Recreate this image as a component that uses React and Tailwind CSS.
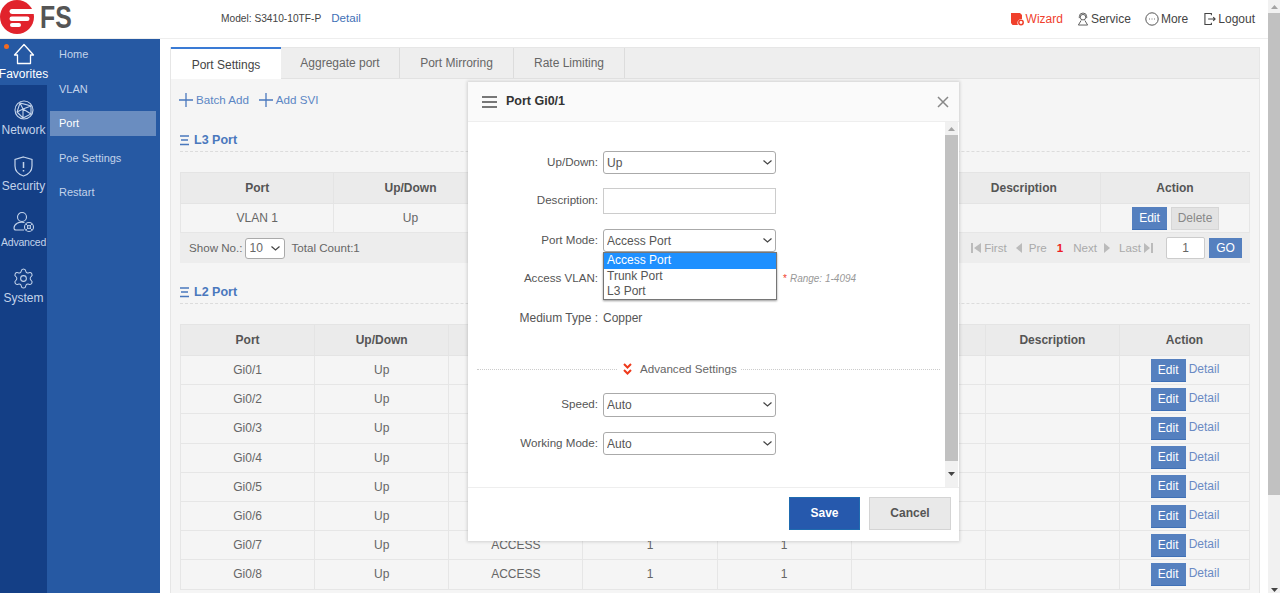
import { Settings } from "lucide-react"

const l2rows = [
  { port: "Gi0/1" },
  { port: "Gi0/2" },
  { port: "Gi0/3" },
  { port: "Gi0/4" },
  { port: "Gi0/5" },
  { port: "Gi0/6" },
  { port: "Gi0/7", mode: "ACCESS", pvid: "1", vlan: "1" },
  { port: "Gi0/8", mode: "ACCESS", pvid: "1", vlan: "1" },
]

function FsLogo() {
  return (
    <div className="flex items-center h-[38px]">
      <svg width="34" height="34" viewBox="0 0 34 34" className="-mt-[5px] shrink-0">
        <circle cx="17" cy="17" r="17" fill="#e1232c" />
        <path d="M12 9h22v5H12a2.500 2.500 0 0 1 0-5z" fill="#fff" />
        <rect x="9.500" y="16.500" width="20" height="4.500" rx="2.200" fill="#fff" />
        <rect x="10" y="23" width="11" height="4" rx="2" fill="#fff" />
      </svg>
      <span className="ml-[6px] -mt-[2px] text-[31px] font-bold leading-[36px] text-[#555] scale-x-[0.8] origin-left">FS</span>
    </div>
  )
}

function TopLink({ icon, label, red, className = "" }) {
  return (
    <div className={`flex items-center gap-[2px] text-[12px] ${red ? "text-[#f0402c]" : "text-[#444]"} ${className}`}>
      {icon}
      <span>{label}</span>
    </div>
  )
}

function SideIcon({ label, small, active, first, children }) {
  return (
    <div className={`flex flex-col items-center justify-end pb-[3px] ${first ? "h-[46px]" : "h-[56px]"} ${active ? "bg-[#2659a3] text-white" : "text-[#c3d3ea]"}`}>
      <div className="h-[22px] flex items-center justify-center">{children}</div>
      <span className={`leading-[15px] mt-[2px] ${small ? "text-[10.5px] tracking-[-0.2px]" : "text-[12px]"}`}>{label}</span>
    </div>
  )
}

function Th({ children, className = "" }) {
  return <th className={`border border-[#e4e4e4] font-bold text-[12px] text-[#555] ${className}`}>{children}</th>
}

function Td({ children, className = "" }) {
  return <td className={`border border-[#e6e6e6] text-center text-[12px] text-[#666] ${className}`}>{children}</td>
}

function SectionTitle({ children, className = "" }) {
  return (
    <div className={`flex items-center gap-[5px] h-[24px] border-b border-dashed border-[#dcdcdc] ${className}`}>
      <svg width="9" height="12" viewBox="0 0 9 12" stroke="#4a78bd" strokeWidth="1.300">
        <path d="M0 2h9M1 6h7M0 10.500h9" />
      </svg>
      <span className="pt-[2px] text-[12.5px] font-bold text-[#4a78bd]">{children}</span>
    </div>
  )
}

function EditBtn() {
  return <span className="inline-flex items-center justify-center w-[35px] h-[23px] bg-[#5580bf] border-b border-[#3f70b6] text-white text-[12px]">Edit</span>
}

function PlusIcon({ className = "" }) {
  return (
    <svg width="14" height="14" viewBox="0 0 14 14" stroke="#4a78bd" strokeWidth="1.300" className={className}>
      <path d="M7 0v14M0 7h14" />
    </svg>
  )
}

function Chevron({ className = "" }) {
  return (
    <svg width="9" height="5" viewBox="0 0 9 5" fill="none" stroke="#444" strokeWidth="1.200" className={`absolute pointer-events-none ${className}`}>
      <path d="M.5.500l4 3.500 4-3.500" />
    </svg>
  )
}

function FormRow({ label, className = "", children }) {
  return (
    <div className={`flex items-center ${className}`}>
      <label className="w-[130px] text-right text-[11.6px] text-[#555] shrink-0 -mt-[2px]">{label}</label>
      <div className="ml-[5px] w-[173px] h-full">{children}</div>
    </div>
  )
}

function FormSelect({ value }) {
  return (
    <div className="relative h-full">
      <select defaultValue={value} className="block w-full h-full appearance-none border border-[#aaa] rounded-[3px] bg-white pl-[3px] text-[12px] text-[#555]">
        <option>{value}</option>
      </select>
      <Chevron className="right-[4px] top-[9px]" />
    </div>
  )
}

export default function App() {
  return (
    <div className="relative w-[1280px] h-[593px] overflow-hidden flex bg-white font-['Liberation_Sans',Arial,sans-serif]">
      <div className="w-[1268px] flex flex-col shrink-0">
        {/* header */}
        <header className="h-[39px] flex items-center border-b border-[#eee] shrink-0">
          <div className="w-[221px] shrink-0"><FsLogo /></div>
          <span className="text-[10.2px] text-[#444]">Model: S3410-10TF-P</span>
          <span className="ml-[10px] -mt-[3px] text-[11.6px] text-[#3f70b6]">Detail</span>
          <div className="ml-auto mr-[13px] flex items-center gap-[14px]">
            <TopLink red label="Wizard" icon={
              <svg width="13" height="14" viewBox="0 0 13 14">
                <path d="M0 1h9l2 2v4a4 4 0 0 0-4 6H1.500L0 11z" fill="#f0402c" />
                <circle cx="10" cy="10.500" r="2.200" fill="none" stroke="#f0402c" strokeWidth="1.500" />
              </svg>
            } />
            <TopLink label="Service" icon={
              <svg width="12" height="15" viewBox="0 0 13 15" fill="none" stroke="#555" strokeWidth="1">
                <circle cx="6.500" cy="5" r="3" />
                <path d="M2.500 6V4.500a4 4 0 0 1 8 0V6M4.500 8.500 1.500 13.500h10l-3-5" />
              </svg>
            } />
            <TopLink label="More" icon={
              <svg width="14" height="14" viewBox="0 0 14 14" fill="none" stroke="#555">
                <circle cx="7" cy="7" r="6.200" />
                <path d="M4 7h.8M6.600 7h.8M9.200 7h.8" strokeWidth="1.200" />
              </svg>
            } />
            <TopLink className="ml-[2px]" label="Logout" icon={
              <svg width="12" height="14" viewBox="0 0 13 14" fill="none" stroke="#444" strokeWidth="1.200">
                <path d="M8 3V1H1v12h7v-2M4.500 7H12M10 5l2 2-2 2" />
              </svg>
            } />
          </div>
        </header>

        <div className="flex-1 flex min-h-0">
          {/* sidebar */}
          <aside className="w-[160px] shrink-0 flex bg-[#2659a3]">
            <nav className="w-[47px] bg-[#143f86] relative">
              <span className="absolute left-[4px] top-[5px] w-[5px] h-[5px] rounded-full bg-[#f26a21]" />
              <SideIcon label="Favorites" active first>
                <svg width="22" height="22" viewBox="0 0 22 22" fill="none" stroke="currentColor" strokeWidth="1.300" strokeLinejoin="round">
                  <path d="M1.500 12 11 1.500 20.500 12H17.500V20.500H4.500V12z" />
                </svg>
              </SideIcon>
              <SideIcon label="Network">
                <svg width="20" height="20" viewBox="0 0 20 20" fill="none" stroke="currentColor" strokeWidth="1.100">
                  <circle cx="10" cy="10" r="9" />
                  <path d="M6 3 3 12l6 6 8-4 0-8zM6 3l3 6-6 3M9 9l8-3M9 9v9M9 9l8 5" />
                </svg>
              </SideIcon>
              <SideIcon label="Security">
                <svg width="19" height="21" viewBox="0 0 19 21" fill="none" stroke="currentColor" strokeWidth="1.200">
                  <path d="M9.500 1 18 3.500V10c0 5-4 8.500-8.500 10C5 18.500 1 15 1 10V3.500z" />
                  <path d="M9.500 6v6M9.500 14v1.500" strokeWidth="1.500" />
                </svg>
              </SideIcon>
              <SideIcon label="Advanced" small>
                <svg width="22" height="22" viewBox="0 0 22 22" fill="none" stroke="currentColor" strokeWidth="1.100">
                  <circle cx="9" cy="6" r="4.500" />
                  <path d="M11.500 11.500C6 10 1 13 1 17c0 1.500 1 2 2 2h8" />
                  <circle cx="16" cy="16" r="4.500" />
                  <path d="M13 13l6 6M19 13l-6 6" strokeWidth="0.900" />
                  <circle cx="16" cy="16" r="1.500" fill="#143f86" />
                </svg>
              </SideIcon>
              <SideIcon label="System">
                <Settings size={23} strokeWidth={1.100} />
              </SideIcon>
            </nav>
            <ul className="flex-1 pl-[3px] pr-[4px] text-[11px] text-[#c3d3ea]">
              <li className="h-[25px] mt-[3px] mb-[9.500px] flex items-center pl-[9px]">Home</li>
              <li className="h-[25px] mb-[9.500px] flex items-center pl-[9px]">VLAN</li>
              <li className="h-[25px] mb-[9.500px] flex items-center pl-[9px] bg-[#6a8dc0] text-white">Port</li>
              <li className="h-[25px] mb-[9.500px] flex items-center pl-[9px]">Poe Settings</li>
              <li className="h-[25px] flex items-center pl-[9px]">Restart</li>
            </ul>
          </aside>

          {/* content */}
          <main className="flex-1 min-w-0 pl-[10px] pr-[8px] pt-[8px]">
            <div className="h-[600px] bg-[#f5f5f5] border border-[#e6e6e6]">
              <div className="h-[31px] flex bg-[#eee] border-b border-[#e2e2e2] text-[12px] text-[#666]">
                <div className="w-[110px] h-[32px] -mt-px flex items-center justify-center bg-white border-t-2 border-[#3a7bd5] text-[#444] pt-[1px]">Port Settings</div>
                <div className="w-[119px] flex items-center justify-center border-r border-[#dcdcdc]">Aggregate port</div>
                <div className="w-[114px] flex items-center justify-center border-r border-[#dcdcdc]">Port Mirroring</div>
                <div className="w-[111px] flex items-center justify-center border-r border-[#dcdcdc]">Rate Limiting</div>
              </div>
              <div className="px-[9px]">
                <div className="flex items-center h-[20px] mt-[11px] text-[11.6px] text-[#5b86c4]">
                  <PlusIcon className="-ml-px" />
                  <span className="ml-[3px]">Batch Add</span>
                  <PlusIcon className="ml-[10px]" />
                  <span className="ml-[3px]">Add SVI</span>
                </div>

                <SectionTitle className="mt-[18px]">L3 Port</SectionTitle>
                <table className="mt-[20px] w-[1070px] table-fixed border-collapse">
                  <thead>
                    <tr className="h-[31px] bg-[#ebebeb]">
                      <Th>Port</Th>
                      <Th>Up/Down</Th>
                      <Th />
                      <Th />
                      <Th />
                      <Th>Description</Th>
                      <Th className="w-[149px]">Action</Th>
                    </tr>
                  </thead>
                  <tbody>
                    <tr className="h-[29px]">
                      <Td>VLAN 1</Td>
                      <Td>Up</Td>
                      <Td />
                      <Td />
                      <Td />
                      <Td />
                      <Td>
                        <div className="flex items-center justify-center gap-[4px] ml-[1px]">
                          <EditBtn />
                          <span className="inline-flex items-center justify-center w-[48px] h-[23px] bg-[#e3e3e3] border border-[#d6d6d6] text-[#888] text-[12px]">Delete</span>
                        </div>
                      </Td>
                    </tr>
                  </tbody>
                </table>
                <div className="w-[1070px] h-[30px] bg-[#ededed] flex items-center text-[11.6px] text-[#666] pl-[9px] pr-[8px]">
                  <span>Show No.:</span>
                  <div className="relative ml-[2px] w-[40px] h-[21px]">
                    <select defaultValue="10" className="block w-full h-full appearance-none border border-[#aaa] rounded-[3px] bg-white pl-[4px] text-[12px] text-[#666]">
                      <option>10</option>
                    </select>
                    <Chevron className="right-[5px] top-[8px]" />
                  </div>
                  <span className="ml-[7px]">Total Count:1</span>
                  <div className="ml-auto flex items-center text-[#aaa]">
                    <svg width="10" height="10" viewBox="0 0 10 10" fill="#bbb" className="mr-[3px]"><path d="M0 0h2v10H0zM10 0v10L3 5z" /></svg>
                    <span>First</span>
                    <svg width="6" height="10" viewBox="0 0 6 10" fill="#bbb" className="ml-[9px] mr-[7px]"><path d="M6 0v10L0 5z" /></svg>
                    <span>Pre</span>
                    <span className="ml-[10px] font-bold text-[#ee1c25]">1</span>
                    <span className="ml-[10px]">Next</span>
                    <svg width="6" height="10" viewBox="0 0 6 10" fill="#bbb" className="ml-[7px]"><path d="M0 0v10l6-5z" /></svg>
                    <span className="ml-[9px]">Last</span>
                    <svg width="9" height="10" viewBox="0 0 9 10" fill="#bbb" className="ml-[3px]"><path d="M0 0v10l6-5zM7 0h2v10H7z" /></svg>
                    <input readOnly value="1" className="ml-[13px] w-[39px] h-[22px] border border-[#ccc] rounded-[2px] bg-white text-center text-[12px] text-[#666]" />
                    <span className="ml-[4px] w-[33px] h-[20px] flex items-center justify-center bg-[#5580bf] text-white text-[12px]">GO</span>
                  </div>
                </div>

                <SectionTitle className="mt-[17px]">L2 Port</SectionTitle>
                <table className="mt-[20px] w-[1070px] table-fixed border-collapse">
                  <thead>
                    <tr className="h-[31px] bg-[#ebebeb]">
                      <Th>Port</Th>
                      <Th>Up/Down</Th>
                      <Th />
                      <Th />
                      <Th />
                      <Th />
                      <Th>Description</Th>
                      <Th className="w-[130px]">Action</Th>
                    </tr>
                  </thead>
                  <tbody>
                    {l2rows.map((row) => (
                      <tr key={row.port} className="h-[29.200px]">
                        <Td>{row.port}</Td>
                        <Td>Up</Td>
                        <Td>{row.mode}</Td>
                        <Td>{row.pvid}</Td>
                        <Td>{row.vlan}</Td>
                        <Td />
                        <Td />
                        <Td>
                          <div className="flex items-center justify-center gap-[3px] ml-[1px]">
                            <EditBtn />
                            <span className="text-[#6a8ac4] -mt-[2px]">Detail</span>
                          </div>
                        </Td>
                      </tr>
                    ))}
                  </tbody>
                </table>
              </div>
            </div>
          </main>
        </div>
      </div>

      {/* page scrollbar */}
      <div className="w-[12px] shrink-0 flex flex-col bg-[#f1f1f1]">
        <div className="h-[13px] flex items-center justify-center">
          <svg width="7" height="4" viewBox="0 0 7 4" fill="#a3a3a3"><path d="M3.500 0 7 4H0z" /></svg>
        </div>
        <div className="h-[482px] bg-[#c1c1c1]" />
        <div className="flex-1 flex items-end justify-center pb-[1px]">
          <svg width="7" height="4" viewBox="0 0 7 4" fill="#444"><path d="M0 0h7L3.500 4z" /></svg>
        </div>
      </div>

      {/* modal */}
      <div className="absolute left-[468px] top-[82px] w-[491px] h-[459px] bg-white flex flex-col shadow-[0_0_3px_1px_rgba(0,0,0,0.15)]">
        <div className="h-[40px] shrink-0 flex items-center bg-[#fafafa] border-b border-[#eee] pl-[14px] pr-[10px]">
          <svg width="15" height="12" viewBox="0 0 15 12" fill="#777">
            <path d="M0 0h15v2H0zM0 5h15v2H0zM0 10h15v2H0z" />
          </svg>
          <span className="ml-[9px] text-[12.5px] font-bold text-[#333]">Port Gi0/1</span>
          <svg width="12" height="12" viewBox="0 0 12 12" stroke="#888" strokeWidth="1.500" className="ml-auto">
            <path d="M1 1l10 10M11 1 1 11" />
          </svg>
        </div>
        <div className="h-[366px] shrink-0 flex border-b border-[#eee]">
          <div className="flex-1 pt-[29px]">
            <FormRow label="Up/Down:" className="h-[23px]"><FormSelect value="Up" /></FormRow>
            <FormRow label="Description:" className="h-[26px] mt-[14px]">
              <input className="w-full h-[26px] border border-[#ccc] bg-white" />
            </FormRow>
            <FormRow label="Port Mode:" className="h-[23px] mt-[15px]"><FormSelect value="Access Port" /></FormRow>
            <div className="flex items-center h-[24px] mt-[14px]">
              <label className="w-[130px] text-right text-[11.6px] text-[#555] shrink-0">Access VLAN:</label>
              <div className="ml-[5px] w-[173px] h-[24px] border border-[#ccc]" />
              <span className="ml-[7px] text-[#f0402c] text-[10px]">*</span>
              <span className="ml-[3px] text-[10px] italic text-[#999]">Range: 1-4094</span>
            </div>
            <div className="flex items-center h-[24px] mt-[16px] text-[12px] text-[#555]">
              <label className="w-[130px] text-right shrink-0">Medium Type :</label>
              <span className="ml-[5px]">Copper</span>
            </div>
            <div className="flex items-center h-[20px] mt-[29px] ml-[9px] mr-[5px] text-[11.6px] text-[#666]">
              <div className="w-[140px] border-t border-dotted border-[#ccc]" />
              <svg width="9" height="12" viewBox="0 0 9 12" fill="none" stroke="#ee3a1c" strokeWidth="2" className="ml-[6px]">
                <path d="M1 1l3.500 3.500L8 1M1 7l3.500 3.500L8 7" />
              </svg>
              <span className="ml-[8px] mr-[4px]">Advanced Settings</span>
              <div className="flex-1 border-t border-dotted border-[#ccc]" />
            </div>
            <FormRow label="Speed:" className="h-[24px] mt-[14px]"><FormSelect value="Auto" /></FormRow>
            <FormRow label="Working Mode:" className="h-[23px] mt-[15px]"><FormSelect value="Auto" /></FormRow>
          </div>
          <div className="w-[13px] mr-[1px] flex flex-col bg-[#f1f1f1]">
            <div className="h-[13px] flex items-center justify-center">
              <svg width="7" height="4" viewBox="0 0 7 4" fill="#a3a3a3"><path d="M3.500 0 7 4H0z" /></svg>
            </div>
            <div className="h-[326px] bg-[#c1c1c1]" />
            <div className="flex-1 flex items-center justify-center">
              <svg width="7" height="4" viewBox="0 0 7 4" fill="#444"><path d="M0 0h7L3.500 4z" /></svg>
            </div>
          </div>
        </div>
        <div className="flex-1 flex items-center justify-end gap-[9px] pr-[8px] pb-[3px]">
          <button className="w-[71px] h-[33px] bg-[#2659ad] border border-[#1f6bb0] text-white text-[12px] font-bold">Save</button>
          <button className="w-[82px] h-[33px] bg-[#e9e9e9] border border-[#d4d4d4] text-[#555] text-[12px] font-bold">Cancel</button>
        </div>

        {/* open select list */}
        <ul className="absolute left-[135px] top-[170px] w-[174px] h-[48px] bg-white border border-[#767676] shadow-[0_1px_2px_rgba(0,0,0,0.4)] text-[12px] text-[#555] leading-[15px]">
          <li className="h-[16px] pl-[3px] bg-[#1e90ff] text-white">Access Port</li>
          <li className="pl-[3px]">Trunk Port</li>
          <li className="pl-[3px]">L3 Port</li>
        </ul>
      </div>
    </div>
  )
}
